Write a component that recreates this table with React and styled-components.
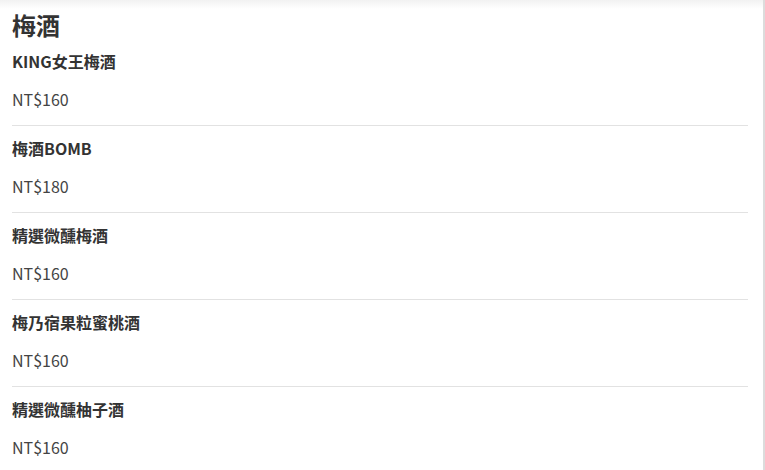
import React from "react"
import styled, { createGlobalStyle } from "styled-components"

const GlobalStyle = createGlobalStyle`
  html, body {
    margin: 0;
    padding: 0;
    background: #fff;
  }
  body {
    font-family: "Noto Sans CJK TC", "Noto Sans", sans-serif;
    color: #333;
  }
`

const Page = styled.div`
  box-sizing: border-box;
  width: 765px;
  height: 470px;
  overflow: hidden;
  border-right: 2px solid #dcdcdc;
  background: linear-gradient(to bottom, #f2f2f2 0px, #fff 9px);
  padding: 0 15px 0 12px;
`

const Heading = styled.h2`
  margin: 11px 0 0;
  font-size: 24px;
  line-height: 28px;
  font-weight: 700;
  color: #333;
`

const List = styled.ul`
  list-style: none;
  margin: 0;
  padding: 0;
`

const Item = styled.li`
  padding: 11px 0 14px;
  border-bottom: 1px solid #e2e2e2;
`

const Name = styled.div`
  font-size: 16px;
  line-height: 22px;
  font-weight: 700;
  color: #333;
`

const Price = styled.div`
  margin-top: 15px;
  font-size: 16px;
  line-height: 24px;
  color: #444;
`

const items = [
    { name: "KING女王梅酒", price: 160 },
    { name: "梅酒BOMB", price: 180 },
    { name: "精選微醺梅酒", price: 160 },
    { name: "梅乃宿果粒蜜桃酒", price: 160 },
    { name: "精選微醺柚子酒", price: 160 },
]

const App = () => {
    return (
        <>
            <GlobalStyle/>
            <Page>
                <Heading>梅酒</Heading>
                <List>
                    {items.map((item) => (
                        <Item key={item.name}>
                            <Name>{item.name}</Name>
                            <Price>NT${item.price}</Price>
                        </Item>
                    ))}
                </List>
            </Page>
        </>
    )
}

export default App
